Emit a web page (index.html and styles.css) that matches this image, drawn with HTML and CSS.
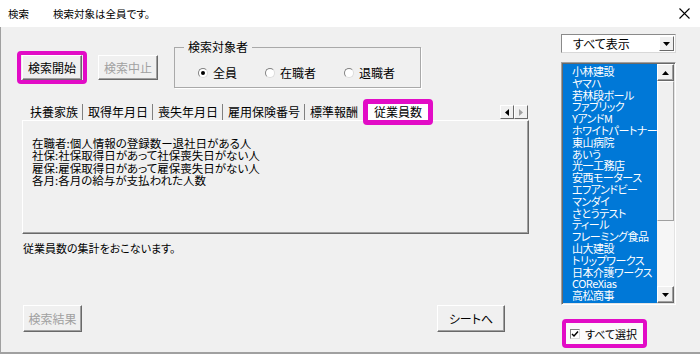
FILE: index.html
```html
<!DOCTYPE html>
<html lang="ja">
<head>
	<meta charset="UTF-8" />
	<title>検索</title>
	<link rel="stylesheet" href="styles.css">
</head>
<body>
	<div class="window">
		<div class="titlebar">
			<span class="title">検索</span>
			<span class="title-msg">検索対象は全員です。</span>
			<svg class="close" width="11" height="11" viewBox="0 0 11 11"><path d="M0.5 0.5L10.5 10.5M10.5 0.5L0.5 10.5" stroke="#000" stroke-width="1.1" fill="none"/></svg>
		</div>
		<div class="main">
			<div class="left">
				<div class="top-row">
					<div class="mark btn-mark"><button class="btn start">検索開始</button></div>
					<button class="btn stop" disabled>検索中止</button>
					<fieldset class="group">
						<legend>検索対象者</legend>
						<div class="radios">
							<label class="radio"><span class="dot on"></span>全員</label>
							<label class="radio"><span class="dot"></span>在職者</label>
							<label class="radio"><span class="dot"></span>退職者</label>
						</div>
					</fieldset>
				</div>
				<div class="tabs">
					<div class="tab-strip">
						<span class="tab">扶養家族</span>
						<span class="tab">取得年月日</span>
						<span class="tab">喪失年月日</span>
						<span class="tab">雇用保険番号</span>
						<span class="tab cut">標準報酬</span>
						<span class="tab active">従業員数</span>
						<div class="tab-arrows">
							<span class="arrow"><svg width="4" height="7" viewBox="0 0 4 7"><path d="M4 0L0 3.5L4 7Z" fill="#000"/></svg></span>
							<span class="arrow"><svg width="4" height="7" viewBox="0 0 4 7"><path d="M0 0L4 3.5L0 7Z" fill="#a0a0a0"/></svg></span>
						</div>
					</div>
					<div class="tab-panel">
						在職者:個人情報の登録数ー退社日がある人<br>
						社保:社保取得日があって社保喪失日がない人<br>
						雇保:雇保取得日があって雇保喪失日がない人<br>
						各月:各月の給与が支払われた人数
					</div>
				</div>
				<p class="desc">従業員数の集計をおこないます。</p>
				<div class="bottom-row">
					<button class="btn result" disabled>検索結果</button>
					<button class="btn sheet">シートへ</button>
				</div>
			</div>
			<div class="right">
				<div class="combo">
					<span class="combo-text">すべて表示</span>
					<span class="combo-btn"><svg width="7" height="4" viewBox="0 0 7 4"><path d="M0 0H7L3.5 4Z" fill="#000"/></svg></span>
				</div>
				<div class="listbox">
					<ul class="items">
						<li>小林建設</li>
						<li>ヤマハ</li>
						<li>若林段ボール</li>
						<li>ファブリック</li>
						<li>YアンドM</li>
						<li>ホワイトパートナー</li>
						<li>東山病院</li>
						<li>あいう</li>
						<li>光一工務店</li>
						<li>安西モータース</li>
						<li>エフアンドビー</li>
						<li>マンダイ</li>
						<li>さとうテスト</li>
						<li>ティール</li>
						<li>フレーミング食品</li>
						<li>山大建設</li>
						<li>トリップワークス</li>
						<li>日本介護ワークス</li>
						<li>COReXias</li>
						<li>高松商事</li>
					</ul>
					<div class="scrollbar">
						<span class="sb-btn"><svg width="7" height="4" viewBox="0 0 7 4"><path d="M0 4H7L3.5 0Z" fill="#000"/></svg></span>
						<span class="sb-thumb"></span>
						<span class="sb-track"></span>
						<span class="sb-btn"><svg width="7" height="4" viewBox="0 0 7 4"><path d="M0 0H7L3.5 4Z" fill="#000"/></svg></span>
					</div>
				</div>
				<div class="mark check-mark">
					<label class="check"><span class="box"><svg width="8" height="8" viewBox="0 0 8 8"><path d="M1 4L3 6L7 1.5" stroke="#000" stroke-width="1.5" fill="none"/></svg></span>すべて選択</label>
				</div>
			</div>
		</div>
	</div>
</body>
</html>
```
FILE: styles.css
```css
* {
	box-sizing: border-box;
}

body {
	margin: 0;
	background-color: #f0f0f0;
	color: #000;
	font-family: "Noto Sans CJK JP", "Noto Sans", sans-serif;
	font-size: 12px;
	font-feature-settings: "palt";
}

.window {
	width: 700px;
	height: 354px;
	overflow: hidden;
	box-shadow: inset 1px 0 #a0a0a0, inset 0 -2px #a0a0a0;
}

.titlebar {
	display: flex;
	align-items: center;
	height: 27px;
	background-color: #fff;
	font-size: 10.5px;
}

.title {
	margin-left: 8px;
}

.title-msg {
	margin-left: 24px;
}

.close {
	margin-left: auto;
	margin-right: 10px;
}

.main {
	display: flex;
}

.left {
	width: 561px;
	padding-left: 17px;
}

.right {
	width: 115px;
}

/* magenta highlight boxes */
.mark {
	border: 4px solid #e20cc6;
	border-radius: 4px;
}

.btn {
	appearance: none;
	width: 60px;
	height: 25px;
	padding: 0;
	background-color: #f0f0f0;
	border: 1px solid;
	border-color: #fff #696969 #696969 #fff;
	box-shadow: inset -1px -1px #a0a0a0;
	font-family: inherit;
	font-size: 12px;
	font-feature-settings: "palt";
	color: #000;
}

.btn:disabled {
	color: #a0a0a0;
}

.top-row {
	display: flex;
	align-items: flex-start;
	margin-top: 13px;
}

.btn-mark {
	margin-top: 11px;
	padding: 0 1px;
}

.stop {
	margin-top: 15px;
	margin-left: 11px;
}

.group {
	width: 247px;
	margin: 0 0 0 16px;
	padding: 0;
	border: 1px solid #a9a9a9;
	box-shadow: 1px 1px 0 #fff;
}

.group legend {
	margin-left: 9px;
	padding: 0 4px;
	line-height: 14px;
}

.radios {
	display: flex;
	gap: 28px;
	margin: 11px 0 6px 23px;
	line-height: 16px;
}

.radio {
	display: flex;
	align-items: center;
}

.dot {
	position: relative;
	width: 10px;
	height: 10px;
	margin-right: 5px;
	border: 1px solid;
	border-color: #808080 #dcdcdc #dcdcdc #808080;
	border-radius: 50%;
	background-color: #fff;
}

.dot.on::after {
	content: "";
	position: absolute;
	left: 2px;
	top: 2px;
	width: 4px;
	height: 4px;
	border-radius: 50%;
	background-color: #000;
}

.tabs {
	width: 507px;
	margin: 11px 0 0 5px;
}

.tab-strip {
	display: flex;
	align-items: flex-end;
	height: 21px;
	padding: 0 1px 0 3px;
}

.tab {
	flex-shrink: 0;
	height: 16px;
	padding: 0 4px 0 5px;
	border-right: 1px solid #808080;
	line-height: 16px;
	white-space: nowrap;
}

.tab.cut {
	width: 58px;
	border-right: none;
}

.tab.active {
	position: relative;
	z-index: 1;
	height: 26px;
	margin-bottom: -5px;
	padding: 0 6px;
	border: 5px solid #e20cc6;
	border-radius: 4px;
	background-color: #fff;
}

.tab-arrows {
	display: flex;
	margin-left: auto;
	margin-bottom: 1px;
}

.arrow {
	display: flex;
	align-items: center;
	justify-content: center;
	width: 14px;
	height: 14px;
	background-color: #f0f0f0;
	border: 1px solid;
	border-color: #fff #696969 #696969 #fff;
}

.tab-panel {
	height: 114px;
	padding: 16px 0 0 9px;
	border: 1px solid;
	border-color: #fff #696969 #696969 #fff;
	box-shadow: inset -1px -1px #a0a0a0;
	font-size: 11.5px;
	line-height: 12.3px;
}

.desc {
	margin: 7px 0 0 6px;
	font-size: 11px;
	line-height: 14px;
}

.bottom-row {
	display: flex;
	justify-content: space-between;
	width: 482px;
	margin: 50px 0 0 6px;
}

.result {
	width: 59px;
	height: 27px;
}

.sheet {
	width: 68px;
	height: 27px;
}

.combo {
	display: flex;
	align-items: center;
	height: 19px;
	margin-top: 7px;
	padding: 1px;
	background-color: #fff;
	border: 1px solid;
	border-color: #8a8a8a #d8d8d8 #d8d8d8 #8a8a8a;
}

.combo-text {
	flex: 1;
	padding-left: 10px;
	line-height: 15px;
}

.combo-btn {
	display: flex;
	align-items: center;
	justify-content: center;
	width: 15px;
	height: 15px;
	background-color: #f0f0f0;
	border: 1px solid;
	border-color: #fff #696969 #696969 #fff;
}

.listbox {
	display: flex;
	height: 243px;
	margin-top: 9px;
	padding: 1px;
	border: 1px solid;
	border-color: #a0a0a0 #fff #fff #a0a0a0;
	box-shadow: inset 1px 1px #696969, inset -1px -1px #e3e3e3;
}

.items {
	width: 95px;
	height: 100%;
	margin: 0;
	padding: 2px 0 0 9px;
	list-style: none;
	overflow: hidden;
	background-color: #0078d7;
	color: #fff;
	font-size: 11px;
	line-height: 11.8px;
	letter-spacing: -0.5px;
	white-space: nowrap;
}

.scrollbar {
	display: flex;
	flex-direction: column;
	width: 17px;
	background-color: #f0f0f0;
}

.sb-btn {
	display: flex;
	align-items: center;
	justify-content: center;
	height: 17px;
	border: 1px solid;
	border-color: #fff #696969 #696969 #fff;
	box-shadow: inset -1px -1px #a0a0a0;
}

.sb-thumb {
	height: 140px;
	border: 1px solid;
	border-color: #fff #a0a0a0 #a0a0a0 #fff;
}

.sb-track {
	flex: 1;
	background-color: #f6f6f6;
}

.check-mark {
	display: flex;
	align-items: center;
	width: 85px;
	height: 29px;
	margin: 14px 0 0 1px;
	padding-left: 4px;
	background-color: #fbfbfb;
}

.check {
	display: flex;
	align-items: center;
	font-size: 11px;
}

.box {
	display: flex;
	align-items: center;
	justify-content: center;
	width: 10px;
	height: 10px;
	margin-right: 5px;
	background-color: #fff;
	border: 1px solid;
	border-color: #808080 #dcdcdc #dcdcdc #808080;
}
```
